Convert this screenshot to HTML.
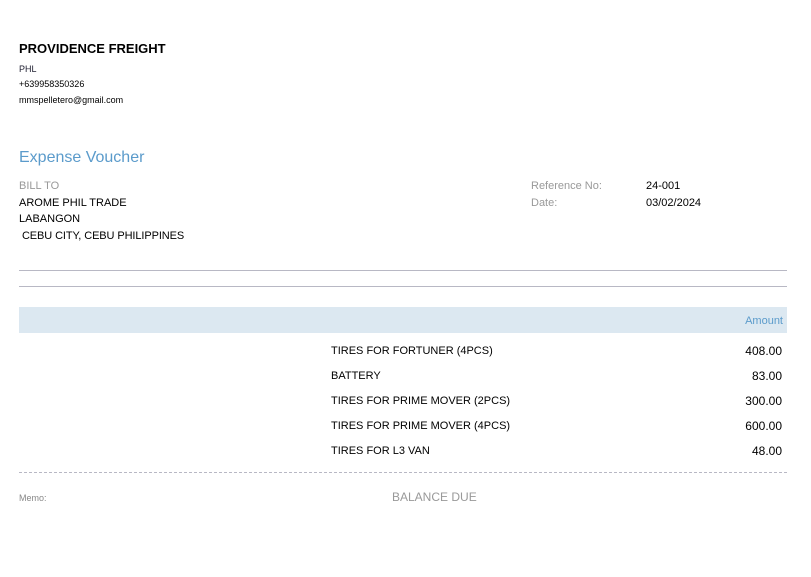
<!DOCTYPE html>
<html><head><style>
body{margin:0;width:811px;height:577px;background:#fff;font-family:"Liberation Sans",sans-serif;color:#000;position:relative;overflow:hidden}
.a{position:absolute;white-space:nowrap}
.hr{position:absolute;left:19px;width:768px;height:1px;background:#b8b8c4}
</style></head><body>
<div class="a" style="left:19px;top:41px;font-size:13px;font-weight:bold">PROVIDENCE FREIGHT</div>
<div class="a" style="left:19px;top:64px;font-size:9px;color:#223">PHL</div>
<div class="a" style="left:19px;top:79px;font-size:9px">+639958350326</div>
<div class="a" style="left:19px;top:95px;font-size:9px">mmspelletero@gmail.com</div>
<div class="a" style="left:19px;top:149px;font-size:16px;color:#5b9bcb">Expense Voucher</div>
<div class="a" style="left:19px;top:180px;font-size:11px;color:#999">BILL TO</div>
<div class="a" style="left:19px;top:197px;font-size:11px">AROME PHIL TRADE</div>
<div class="a" style="left:19px;top:213px;font-size:11px">LABANGON</div>
<div class="a" style="left:19px;top:230px;font-size:11px;letter-spacing:-0.1px">&nbsp;CEBU CITY, CEBU PHILIPPINES</div>
<div class="a" style="left:531px;top:180px;font-size:11px;color:#999">Reference No:</div>
<div class="a" style="left:531px;top:197px;font-size:11px;color:#999">Date:</div>
<div class="a" style="left:646px;top:180px;font-size:11px">24-001</div>
<div class="a" style="left:646px;top:197px;font-size:11px">03/02/2024</div>
<div class="hr" style="top:270px"></div>
<div class="hr" style="top:286px"></div>
<div class="a" style="left:19px;top:307px;width:768px;height:26px;background:#dce8f1"></div>
<div class="a" style="right:28px;top:315px;font-size:11px;color:#5b9bcb">Amount</div>
<div class="a" style="left:331px;top:345px;font-size:11px">TIRES FOR FORTUNER (4PCS)</div>
<div class="a" style="left:331px;top:370px;font-size:11px">BATTERY</div>
<div class="a" style="left:331px;top:395px;font-size:11px">TIRES FOR PRIME MOVER (2PCS)</div>
<div class="a" style="left:331px;top:420px;font-size:11px">TIRES FOR PRIME MOVER (4PCS)</div>
<div class="a" style="left:331px;top:445px;font-size:11px">TIRES FOR L3 VAN</div>
<div class="a" style="right:29px;top:344px;font-size:12px">408.00</div>
<div class="a" style="right:29px;top:369px;font-size:12px">83.00</div>
<div class="a" style="right:29px;top:394px;font-size:12px">300.00</div>
<div class="a" style="right:29px;top:419px;font-size:12px">600.00</div>
<div class="a" style="right:29px;top:444px;font-size:12px">48.00</div>
<div class="a" style="left:19px;top:472px;width:768px;border-top:1px dashed #b8b8c4"></div>
<div class="a" style="left:19px;top:493px;font-size:9px;color:#888">Memo:</div>
<div class="a" style="left:392px;top:490px;font-size:12px;color:#999">BALANCE DUE</div>
</body></html>
